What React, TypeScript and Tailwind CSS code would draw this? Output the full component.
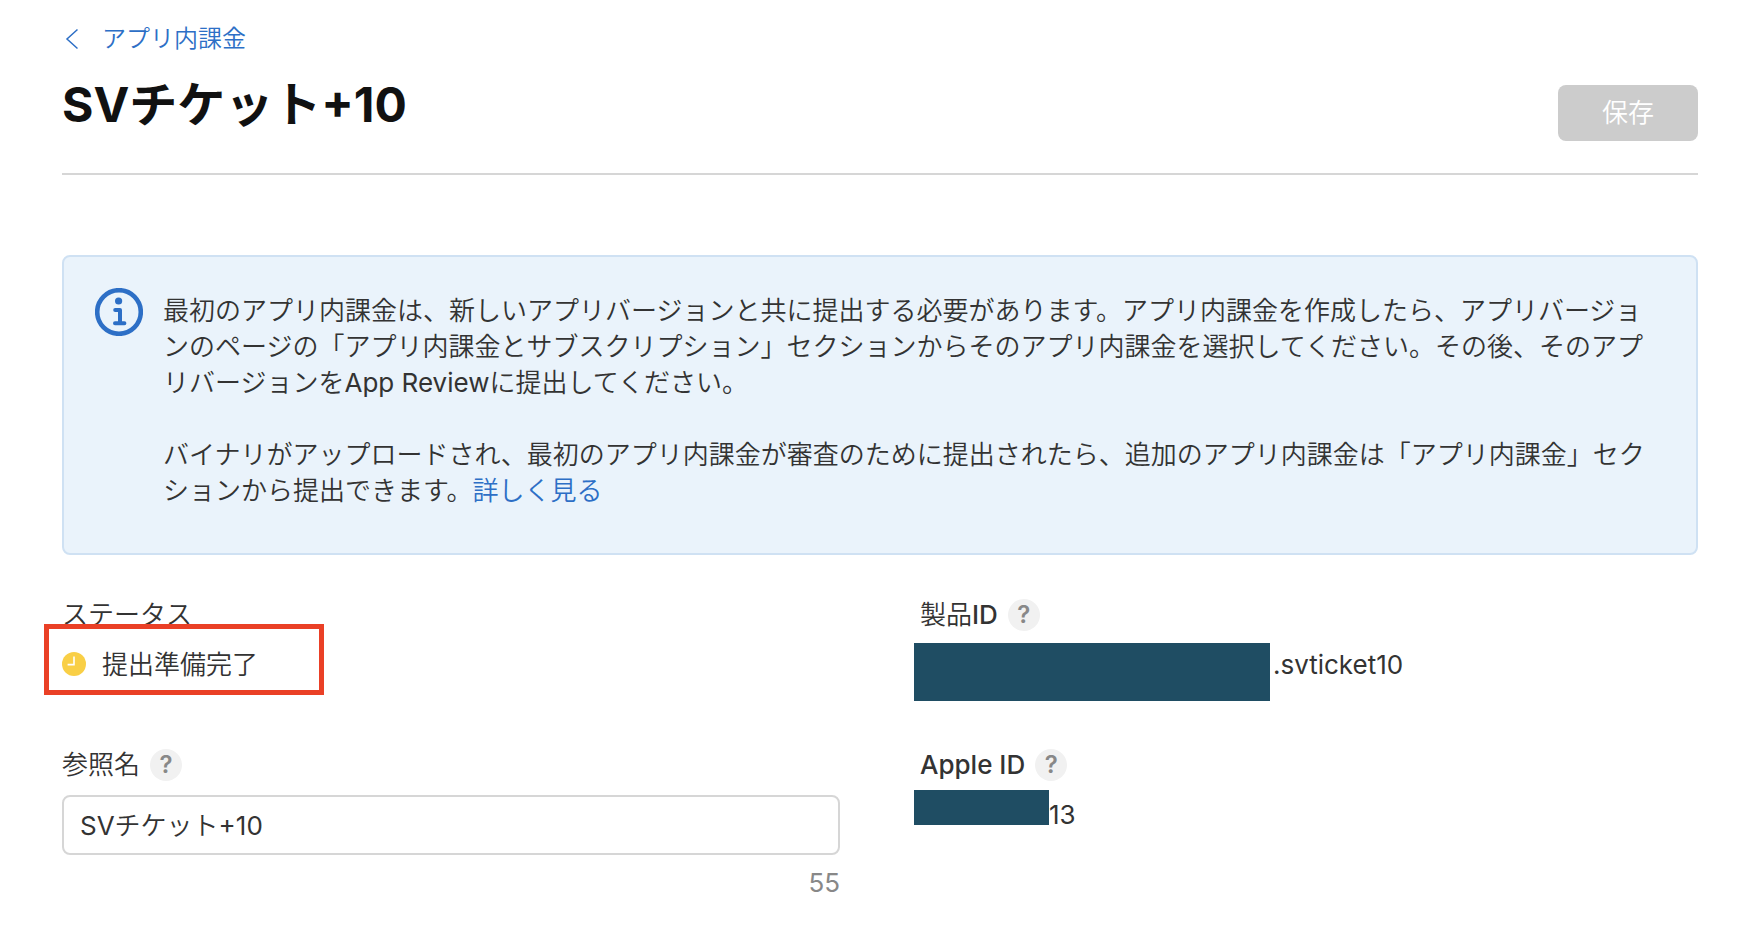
import { useState, type ReactNode } from "react";

const MAX_NAME_LENGTH = 64;

function HelpButton({ topic }: { topic: string }) {
  return (
    <button
      type="button"
      aria-label={`${topic}のヘルプ`}
      className="flex size-8 items-center justify-center rounded-full bg-[#f1f1f1] text-2xl leading-none font-semibold text-[#888]"
    >
      ?
    </button>
  );
}

function InfoIcon() {
  return (
    <svg viewBox="0 0 48 48" className="size-12 shrink-0" fill="none" aria-hidden="true">
      <circle cx="24" cy="24" r="21.8" stroke="#2d6fc6" strokeWidth="4.6" />
      <circle cx="23.6" cy="13" r="3.6" fill="#2d6fc6" />
      <path
        d="M20.2 22H25V35M20 35.2H29.4"
        stroke="#2d6fc6"
        strokeWidth="4"
        strokeLinecap="round"
        strokeLinejoin="round"
      />
    </svg>
  );
}

function ClockIcon() {
  return (
    <svg viewBox="0 0 24 24" className="size-6 shrink-0" aria-hidden="true">
      <circle cx="12" cy="12" r="12" fill="#f9cf46" />
      <path d="M12 4.4V12.6H5.6" fill="none" stroke="#fff" strokeWidth="1.6" />
    </svg>
  );
}

function Redacted({ className }: { className: string }) {
  return <span className={`-ml-1.5 shrink-0 bg-[#1f4d63] ${className}`} />;
}

function FieldLabel({ children }: { children: ReactNode }) {
  return <div className="flex h-8 items-center gap-2.5 leading-8">{children}</div>;
}

export default function App() {
  const [name, setName] = useState("SVチケット+10");

  return (
    <main
      lang="ja"
      className="min-h-screen bg-white pt-5 pr-14 pb-8 pl-[62px] font-['Inter','Noto_Sans_CJK_JP_DemiLight','Noto_Sans_CJK_JP',sans-serif] text-[26px] text-[#333]"
    >
      <header className="border-b-2 border-[#d6d6d6] pb-8">
        <a href="#purchases" className="inline-flex h-[38px] items-center gap-[23px] align-top text-2xl text-[#2d6fc6]">
          <svg viewBox="0 0 17 22" className="h-[22px] w-[17px]" fill="none" aria-hidden="true">
            <path d="M15.5 1.5L5 11L15.5 20.5" stroke="currentColor" strokeWidth="1.5" />
          </svg>
          アプリ内課金
        </a>
        <div className="mt-[26px] flex items-start justify-between">
          <h1 className="font-['Inter','Noto_Sans_CJK_JP',sans-serif] text-5xl leading-10 font-bold text-[#111]">
            SVチケット+10
          </h1>
          <button type="button" disabled className="h-14 w-[140px] rounded-lg bg-[#ccc] pb-0.5 text-white">
            保存
          </button>
        </div>
      </header>

      <section className="mt-20 flex gap-5 rounded-lg border-2 border-[#cfe1f3] bg-[#eaf3fb] pt-[31px] pr-10 pb-11 pl-[31px] leading-9">
        <InfoIcon />
        <div className="pt-[5px]">
          <p>
            最初のアプリ内課金は、新しいアプリバージョンと共に提出する必要があります。アプリ内課金を作成したら、アプリバージョンのページの「アプリ内課金とサブスクリプション」セクションからそのアプリ内課金を選択してください。その後、そのアプリバージョンをApp Reviewに提出してください。
          </p>
          <p className="mt-9">
            バイナリがアップロードされ、最初のアプリ内課金が審査のために提出されたら、追加のアプリ内課金は「アプリ内課金」セクションから提出できます。
            <a href="#learn-more" className="text-[#2d6fc6]">
              詳しく見る
            </a>
          </p>
        </div>
      </section>

      <div className="mt-11 grid grid-cols-2 gap-x-20 gap-y-12">
        <div>
          <FieldLabel>ステータス</FieldLabel>
          <div className="relative mt-[15px] flex h-9 items-center gap-4">
            <ClockIcon />
            <span>提出準備完了</span>
            {/* highlight around the current status */}
            <span className="pointer-events-none absolute -top-[22px] -left-[18px] h-[71px] w-[280px] border-5 border-[#ea4026]" />
          </div>
        </div>

        <div>
          <FieldLabel>
            <span className="font-medium">製品ID</span>
            <HelpButton topic="製品ID" />
          </FieldLabel>
          <div className="mt-3 flex items-start gap-[3px] leading-[44px]">
            <Redacted className="h-[58px] w-[356px]" />
            <span>.svticket10</span>
          </div>
        </div>

        <div>
          <FieldLabel>
            <label htmlFor="reference-name">参照名</label>
            <HelpButton topic="参照名" />
          </FieldLabel>
          <input
            id="reference-name"
            type="text"
            value={name}
            onChange={(e) => setName(e.target.value)}
            className="mt-3.5 block h-15 w-full rounded-lg border-2 border-[#d6d6d6] px-4 pb-1"
          />
          <p className="mt-2.5 text-right leading-9 text-[#888]">{MAX_NAME_LENGTH - name.length}</p>
        </div>

        <div>
          <FieldLabel>
            <span className="font-medium">Apple ID</span>
            <HelpButton topic="Apple ID" />
          </FieldLabel>
          <div className="mt-[9px] flex items-start leading-[50px]">
            <Redacted className="h-[35px] w-[135px]" />
            <span>13</span>
          </div>
        </div>
      </div>
    </main>
  );
}
